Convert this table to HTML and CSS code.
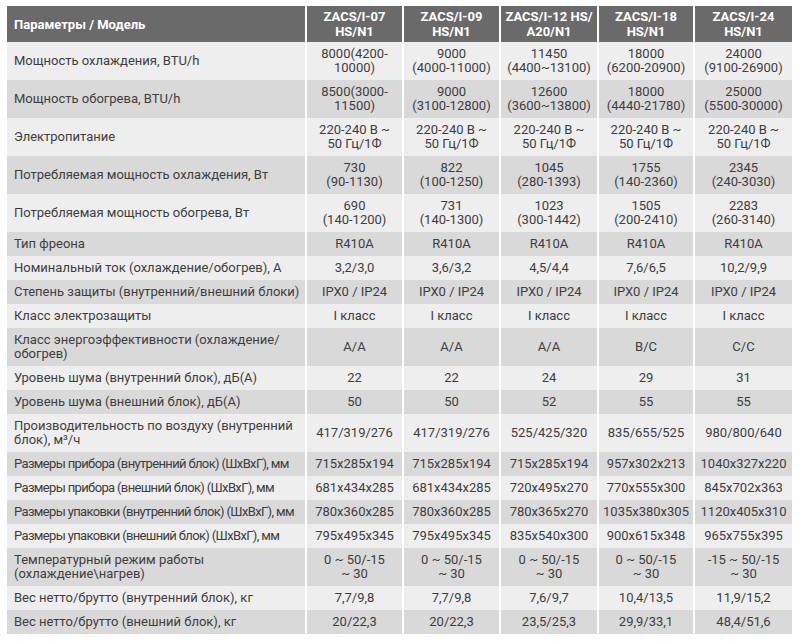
FILE: index.html
```html
<!DOCTYPE html>
<html lang="ru">
<head>
<meta charset="utf-8">
<title>Параметры</title>
<link rel="stylesheet" href="styles.css">
</head>
<body>
<table class="spec">
<colgroup>
<col class="c-name"><col class="c1"><col class="c2"><col class="c3"><col class="c4"><col class="c5">
</colgroup>
<thead>
<tr><th class="name">Параметры / Модель</th><th>ZACS/I-07<br>HS/N1</th><th>ZACS/I-09<br>HS/N1</th><th>ZACS/I-12 HS/<br>A20/N1</th><th>ZACS/I-18<br>HS/N1</th><th>ZACS/I-24<br>HS/N1</th></tr>
</thead>
<tbody>
<tr><td class="name">Мощность охлаждения, BTU/h</td><td>8000(4200-<br>10000)</td><td>9000<br>(4000-11000)</td><td>11450<br>(4400~13100)</td><td>18000<br>(6200-20900)</td><td>24000<br>(9100-26900)</td></tr>
<tr><td class="name">Мощность обогрева, BTU/h</td><td>8500(3000-<br>11500)</td><td>9000<br>(3100-12800)</td><td>12600<br>(3600~13800)</td><td>18000<br>(4440-21780)</td><td>25000<br>(5500-30000)</td></tr>
<tr><td class="name">Электропитание</td><td>220-240 В ~<br>50 Гц/1Ф</td><td>220-240 В ~<br>50 Гц/1Ф</td><td>220-240 В ~<br>50 Гц/1Ф</td><td>220-240 В ~<br>50 Гц/1Ф</td><td>220-240 В ~<br>50 Гц/1Ф</td></tr>
<tr><td class="name">Потребляемая мощность охлаждения, Вт</td><td>730<br>(90-1130)</td><td>822<br>(100-1250)</td><td>1045<br>(280-1393)</td><td>1755<br>(140-2360)</td><td>2345<br>(240-3030)</td></tr>
<tr><td class="name">Потребляемая мощность обогрева, Вт</td><td>690<br>(140-1200)</td><td>731<br>(140-1300)</td><td>1023<br>(300-1442)</td><td>1505<br>(200-2410)</td><td>2283<br>(260-3140)</td></tr>
<tr><td class="name">Тип фреона</td><td>R410A</td><td>R410A</td><td>R410A</td><td>R410A</td><td>R410A</td></tr>
<tr><td class="name">Номинальный ток (охлаждение/обогрев), А</td><td>3,2/3,0</td><td>3,6/3,2</td><td>4,5/4,4</td><td>7,6/6,5</td><td>10,2/9,9</td></tr>
<tr><td class="name">Степень защиты (внутренний/внешний блоки)</td><td>IPX0 / IP24</td><td>IPX0 / IP24</td><td>IPX0 / IP24</td><td>IPX0 / IP24</td><td>IPX0 / IP24</td></tr>
<tr><td class="name">Класс электрозащиты</td><td>I класс</td><td>I класс</td><td>I класс</td><td>I класс</td><td>I класс</td></tr>
<tr><td class="name">Класс энергоэффективности (охлаждение/<br>обогрев)</td><td>A/A</td><td>A/A</td><td>A/A</td><td>B/C</td><td>C/C</td></tr>
<tr><td class="name">Уровень шума (внутренний блок), дБ(А)</td><td>22</td><td>22</td><td>24</td><td>29</td><td>31</td></tr>
<tr><td class="name">Уровень шума (внешний блок), дБ(А)</td><td>50</td><td>50</td><td>52</td><td>55</td><td>55</td></tr>
<tr><td class="name">Производительность по воздуху (внутренний<br>блок), м³/ч</td><td>417/319/276</td><td>417/319/276</td><td>525/425/320</td><td>835/655/525</td><td>980/800/640</td></tr>
<tr><td class="name tight">Размеры прибора (внутренний блок) (ШхВхГ), мм</td><td>715x285x194</td><td>715x285x194</td><td>715x285x194</td><td>957x302x213</td><td>1040x327x220</td></tr>
<tr><td class="name tight">Размеры прибора (внешний блок) (ШхВхГ), мм</td><td>681x434x285</td><td>681x434x285</td><td>720x495x270</td><td>770x555x300</td><td>845x702x363</td></tr>
<tr><td class="name tight">Размеры упаковки (внутренний блок) (ШхВхГ), мм</td><td>780x360x285</td><td>780x360x285</td><td>780x365x270</td><td>1035x380x305</td><td>1120x405x310</td></tr>
<tr><td class="name tight">Размеры упаковки (внешний блок) (ШхВхГ), мм</td><td>795x495x345</td><td>795x495x345</td><td>835x540x300</td><td>900x615x348</td><td>965x755x395</td></tr>
<tr><td class="name">Температурный режим работы<br>(охлаждение\нагрев)</td><td>0 ~ 50/-15<br>~ 30</td><td>0 ~ 50/-15<br>~ 30</td><td>0 ~ 50/-15<br>~ 30</td><td>0 ~ 50/-15<br>~ 30</td><td>-15 ~ 50/-15<br>~ 30</td></tr>
<tr><td class="name">Вес нетто/брутто (внутренний блок), кг</td><td>7,7/9,8</td><td>7,7/9,8</td><td>7,6/9,7</td><td>10,4/13,5</td><td>11,9/15,2</td></tr>
<tr><td class="name">Вес нетто/брутто (внешний блок), кг</td><td>20/22,3</td><td>20/22,3</td><td>23,5/25,3</td><td>29,9/33,1</td><td>48,4/51,6</td></tr>
</tbody>
</table>
</body>
</html>
```

FILE: styles.css
```css
html, body {
  background: #ffffff;
}
body {
  margin: 6px 8px 0 7px;
  font-family: Roboto, "Liberation Sans", sans-serif;
}
.spec {
  width: 785px;
  table-layout: fixed;
  border-collapse: separate;
  border-spacing: 0;
  font-size: 13px;
  color: #3d3d3d;
}
.c-name { width: 298px; }
.c1 { width: 97px; }
.c2 { width: 97px; }
.c3 { width: 98px; }
.c4 { width: 96px; }
.c5 { width: 99px; }
.spec th,
.spec td {
  white-space: nowrap;
  text-align: center;
  vertical-align: middle;
  padding: 5px 0;
  line-height: 14px;
  border-left: 2px solid #ffffff;
  overflow: hidden;
}
.spec th.name,
.spec td.name {
  text-align: left;
  padding-left: 7px;
  border-left: none;
}
.spec td.tight {
  letter-spacing: -0.65px;
}
.spec thead th {
  background: #6a6a6a;
  color: #ffffff;
  font-weight: 700;
  padding: 3px 0;
  line-height: 15px;
}
.spec thead th.name {
  padding-left: 7px;
}
.spec tbody tr:nth-child(odd) td {
  background: #eeeeee;
}
.spec tbody tr:nth-child(even) td {
  background: #d9d9d9;
}
```
